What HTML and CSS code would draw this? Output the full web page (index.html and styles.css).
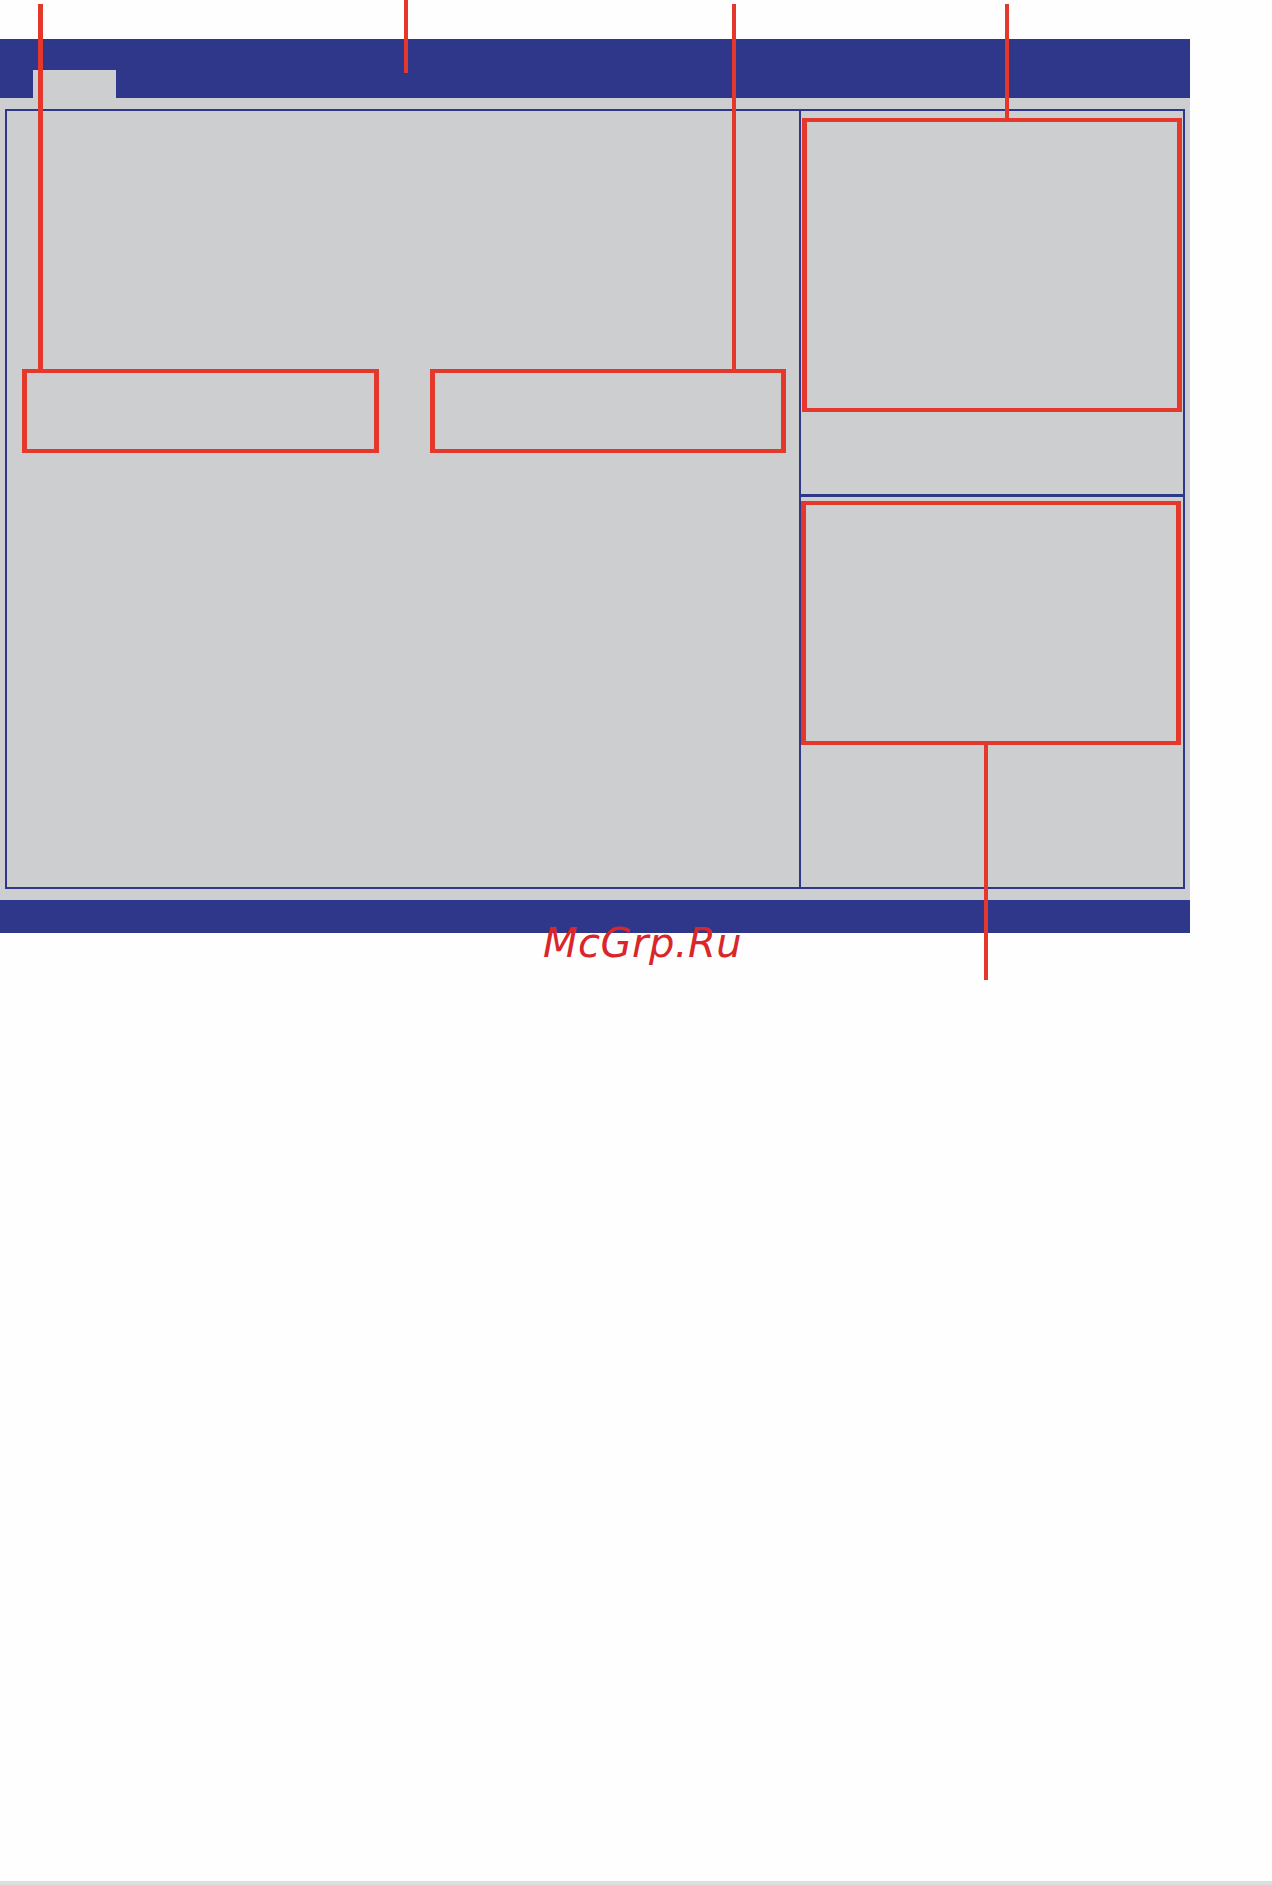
FILE: index.html
```html
<!DOCTYPE html>
<html lang="ru">
<head>
<meta charset="utf-8">
<title>BIOS screen</title>
<link rel="stylesheet" href="styles.css">
</head>
<body>
<div class="page">
  <div class="bios">
    <div class="topbar"><div class="tab"></div></div>
    <div class="main">
      <div class="frame">
        <div class="left-panel">
          <div class="box box-a"></div>
          <div class="box box-b"></div>
        </div>
        <div class="right-panel">
          <div class="right-top"><div class="box box-c"></div></div>
          <div class="right-bottom"><div class="box box-d"></div></div>
        </div>
      </div>
    </div>
    <div class="bottombar"></div>
  </div>

  <div class="callout l1"></div>
  <div class="callout l2"></div>
  <div class="callout l3"></div>
  <div class="callout l4"></div>
  <div class="callout l5"></div>

  <div class="watermark">McGrp.Ru</div>
  <div class="footer-line"></div>
</div>
</body>
</html>
```

FILE: styles.css
```css
html, body {
  margin: 0;
  padding: 0;
  background: #fefefe;
  font-family: "DejaVu Sans", "Liberation Sans", sans-serif;
}

.page {
  position: relative;
  width: 1272px;
  height: 1885px;
  overflow: hidden;
  display: flex;
  flex-direction: column;
}

.bios {
  margin-top: 39px;
  width: 1190px;
}

.topbar {
  height: 59px;
  background: #2f378b;
  display: flex;
  align-items: flex-end;
  padding-left: 33px;
}

.tab {
  width: 83px;
  height: 28px;
  background: #cdced0;
}

.main {
  background: #cdced0;
  padding: 11px 5px;
}

.frame {
  height: 780px;
  box-sizing: border-box;
  border: 2px solid #2f378b;
  display: grid;
  grid-template-columns: 792px 1fr;
}

.left-panel {
  display: flex;
  align-items: flex-start;
  padding: 258px 0 0 15px;
  gap: 51px;
}

.box {
  box-sizing: border-box;
  border-style: solid;
  border-color: #e5382d;
  border-width: 4px 5px;
}

.box-a {
  width: 357px;
  height: 84px;
}

.box-b {
  width: 356px;
  height: 84px;
}

.right-panel {
  border-left: 2px solid #2f378b;
  display: flex;
  flex-direction: column;
}

.right-top {
  height: 386px;
  box-sizing: border-box;
  padding: 7px 1px 0 1px;
  border-bottom: 3px solid #2f378b;
}

.box-c {
  height: 294px;
}

.right-bottom {
  flex: 1;
  padding: 4px 2px 0 0;
}

.box-d {
  height: 244px;
}

.bottombar {
  height: 33px;
  background: #2f378b;
}

/* callout leader lines drawn over the screen */
.callout {
  position: absolute;
  background: #e5382d;
}

.l1 { left: 38px; top: 4px; width: 5px; height: 365px; }
.l2 { left: 404px; top: 0; width: 4px; height: 73px; }
.l3 { left: 732px; top: 4px; width: 4px; height: 365px; }
.l4 { left: 1005px; top: 4px; width: 4px; height: 114px; }
.l5 { left: 984px; top: 745px; width: 4px; height: 235px; }

.watermark {
  position: absolute;
  left: 543px;
  top: 919px;
  font-family: "DejaVu Sans", sans-serif;
  font-style: italic;
  font-size: 40px;
  line-height: 48px;
  letter-spacing: 0.5px;
  color: #d9262b;
}

.footer-line {
  position: absolute;
  left: 0;
  right: 0;
  bottom: 0;
  height: 4px;
  background: #dedede;
}
```
